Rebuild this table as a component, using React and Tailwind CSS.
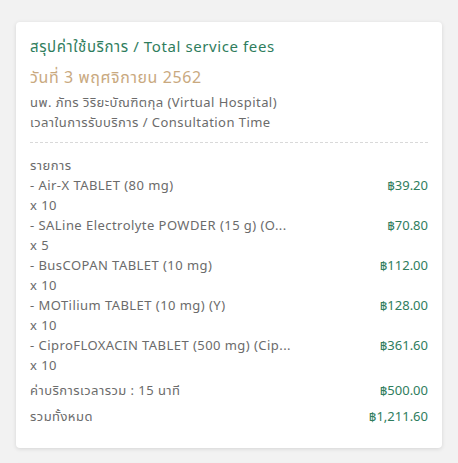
export default function App() {
  const items = [
    ["- Air-X TABLET (80 mg)", "x 10", "฿39.20"],
    ["- SALine Electrolyte POWDER (15 g) (O...", "x 5", "฿70.80"],
    ["- BusCOPAN TABLET (10 mg)", "x 10", "฿112.00"],
    ["- MOTilium TABLET (10 mg) (Y)", "x 10", "฿128.00"],
    ["- CiproFLOXACIN TABLET (500 mg) (Cip...", "x 10", "฿361.60"],
  ];
  return (
    <div className="w-[458px] h-[463px] overflow-hidden bg-[#f2f2f2] pt-[22px] px-[16px]" style={{ fontFamily: '"Noto Sans", "Noto Sans Thai", sans-serif' }}>
      <div className="bg-white rounded-[4px] shadow-[0_1px_4px_rgba(0,0,0,0.12)] px-[14px] pt-[12px] pb-[22px]">
        <div className="text-[15px] leading-[24px] tracking-[0.6px] text-[#2f7d5d]">สรุปค่าใช้บริการ / Total service fees</div>
        <div className="text-[16px] leading-[24px] mt-[7px] tracking-[0.6px] text-[#c9a97f]">วันที่ 3 พฤศจิกายน 2562</div>
        <div className="text-[13px] leading-[20px] mt-[3px] tracking-[0.45px] text-[#6b6b6b]">นพ. ภัทร วิริยะบัณฑิตกุล (Virtual Hospital)</div>
        <div className="text-[13px] leading-[20px] tracking-[0.45px] text-[#6b6b6b]">เวลาในการรับบริการ / Consultation Time</div>
        <div className="border-t border-dashed border-[#d9d9d9] mt-[10px] mb-[12px]" />
        <div className="text-[13px] leading-[20px] tracking-[0.45px] text-[#6b6b6b]">รายการ</div>
        {items.map(([n, q, p]) => (
          <div key={n}>
            <div className="flex justify-between text-[13px] leading-[20px]">
              <span className="text-[#6b6b6b] tracking-[0.45px]">{n}</span>
              <span className="text-[#2f7d5d]">{p}</span>
            </div>
            <div className="text-[13px] leading-[20px] tracking-[0.45px] text-[#6b6b6b]">{q}</div>
          </div>
        ))}
        <div className="flex justify-between text-[13px] leading-[20px] mt-[5px] text-[#6b6b6b]">
          <span className="tracking-[0.45px]">ค่าบริการเวลารวม : 15 นาที</span>
          <span className="text-[#2f7d5d]">฿500.00</span>
        </div>
        <div className="flex justify-between text-[13px] leading-[20px] mt-[6px] text-[#6b6b6b]">
          <span className="tracking-[0.45px]">รวมทั้งหมด</span>
          <span className="text-[#2f7d5d]">฿1,211.60</span>
        </div>
      </div>
      <div className="bg-white rounded-[4px] shadow-[0_1px_4px_rgba(0,0,0,0.12)] h-[40px] mt-[17px]" />
    </div>
  );
}
